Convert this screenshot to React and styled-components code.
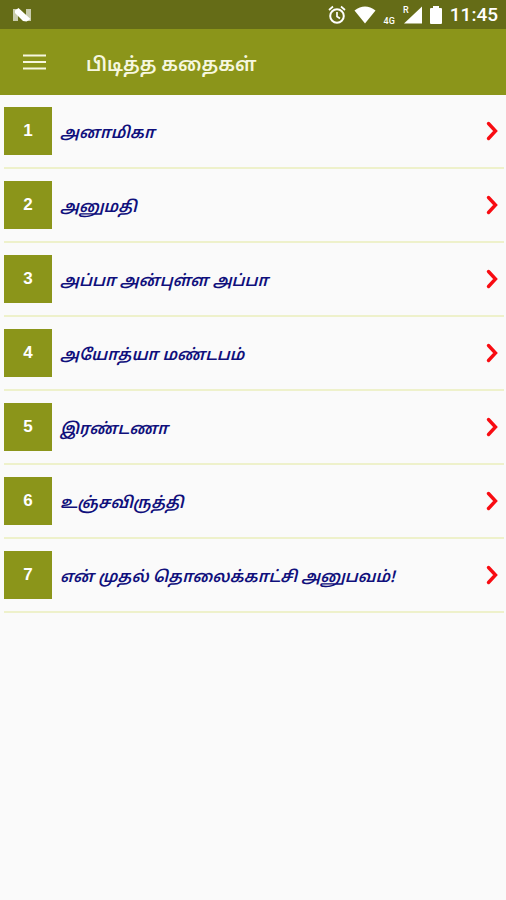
import React from 'react'
import styled, { createGlobalStyle, ThemeProvider } from 'styled-components'

const theme = {
  primary: '#8b951a',
  primaryDark: '#656c17',
  background: '#fafafa',
  divider: '#eef1cb',
  title: '#f6f7df',
  text: '#10107c',
  arrow: '#f80c12',
}

const stories = [
  'அனாமிகா',
  'அனுமதி',
  'அப்பா அன்புள்ள அப்பா',
  'அயோத்யா மண்டபம்',
  'இரண்டணா',
  'உஞ்சவிருத்தி',
  'என் முதல் தொலைக்காட்சி அனுபவம்!',
]

const GlobalStyle = createGlobalStyle`
  * {
    box-sizing: border-box;
  }

  body {
    margin: 0;
    background-color: ${theme.background};
    font-family: 'Noto Sans Tamil', 'Noto Sans', sans-serif;
  }
`

const StatusBar = styled.div`
  display: flex;
  align-items: center;
  justify-content: space-between;
  height: 29px;
  padding: 0 8px 0 12px;
  color: #ffffff;
  background-color: ${props => props.theme.primaryDark};
`

const StatusIcons = styled.div`
  display: flex;
  align-items: center;
  gap: 8px;
`

const Signal = styled.div`
  display: flex;
  align-items: flex-end;
  gap: 6px;
`

const Network = styled.span`
  font: 500 9px/8px Roboto, sans-serif;
`

const Clock = styled.time`
  font: 500 19px/28px Roboto, sans-serif;
`

const AppBar = styled.header`
  display: flex;
  align-items: center;
  gap: 40px;
  height: 66px;
  padding: 0 22px;
  background-color: ${props => props.theme.primary};
`

const MenuButton = styled.button`
  display: flex;
  padding: 0;
  border: 0;
  color: ${props => props.theme.title};
  background: none;
  cursor: pointer;
`

const Title = styled.h1`
  margin: 0;
  padding-top: 8px;
  color: ${props => props.theme.title};
  font-size: 19px;
  font-weight: 600;
  line-height: 32px;
`

const StoryList = styled.ol`
  margin: 0;
  padding: 0 2px 0 4px;
  list-style: none;
`

const StoryLink = styled.a`
  display: flex;
  align-items: center;
  gap: 8px;
  padding: 12px 6px 12px 0;
  border-bottom: 2px solid ${props => props.theme.divider};
  color: ${props => props.theme.text};
  text-decoration: none;
`

const Number = styled.span`
  flex: none;
  width: 48px;
  color: #ffffff;
  background-color: ${props => props.theme.primary};
  font: bold 17px/48px 'Liberation Sans', sans-serif;
  text-align: center;
`

const StoryTitle = styled.span`
  flex: 1;
  padding-top: 6px;
  font-size: 16px;
  font-style: italic;
  font-weight: 600;
  line-height: 28px;
`

const Arrow = styled.svg`
  flex: none;
  color: ${props => props.theme.arrow};
`

const Story = ({ number, title }) => (
  <li>
    <StoryLink href="#story">
      <Number>{number}</Number>
      <StoryTitle>{title}</StoryTitle>
      <Arrow width="12" height="20" viewBox="0 0 12 20" aria-hidden="true">
        <path
          d="M2.5 2.5 9.5 10l-7 7.5"
          fill="none"
          stroke="currentColor"
          strokeWidth="3.4"
          strokeLinecap="round"
        />
      </Arrow>
    </StoryLink>
  </li>
)

const App = () => (
  <ThemeProvider theme={theme}>
    <GlobalStyle />
    <StatusBar>
      <svg width="20" height="16" viewBox="0 0 20 16" aria-hidden="true">
        <path d="M1 2h5v12H1zM14 2h5v12h-5z" fill="#c9ccae" />
        <path d="M3 3.500 6.500 1 18.500 12 14.500 14.500 11 14 3 6z" fill="#ffffff" />
      </svg>
      <StatusIcons>
        <svg width="18" height="20" viewBox="0 0 18 20" aria-hidden="true">
          <g fill="none" stroke="currentColor" strokeWidth="2">
            <circle cx="9" cy="11" r="6.8" />
            <path d="M1 5l4-3.5M17 5l-4-3.5M9 7v4.5l3 2" strokeWidth="1.7" />
          </g>
        </svg>
        <svg width="22" height="18" viewBox="0 0 22 18" aria-hidden="true">
          <path d="M.5 4.500Q11-3.500 21.500 4.500L11 17.500z" fill="currentColor" />
        </svg>
        <Signal>
          <Network>4G</Network>
          <svg width="21" height="20" viewBox="0 0 21 20" aria-hidden="true">
            <path d="M21 1.500v17H3z" fill="currentColor" />
            <text
              x="2"
              y="8"
              fill="currentColor"
              fontFamily="Roboto"
              fontSize="9"
              fontWeight="500"
            >
              R
            </text>
          </svg>
        </Signal>
        <svg width="12" height="18" viewBox="0 0 12 18" aria-hidden="true">
          <path
            d="M3 0h6v2h2q1 0 1 1v14q0 1-1 1H1q-1 0-1-1V3q0-1 1-1h2z"
            fill="currentColor"
          />
        </svg>
        <Clock>11:45</Clock>
      </StatusIcons>
    </StatusBar>
    <AppBar>
      <MenuButton type="button" aria-label="Menu">
        <svg width="24" height="18" viewBox="0 0 24 18" aria-hidden="true">
          <path
            d="M1 2.500h23M1 9h23M1 15.500h23"
            stroke="currentColor"
            strokeWidth="2"
          />
        </svg>
      </MenuButton>
      <Title>பிடித்த கதைகள்</Title>
    </AppBar>
    <StoryList>
      {stories.map((title, index) => (
        <Story key={title} number={index + 1} title={title} />
      ))}
    </StoryList>
  </ThemeProvider>
)

export default App
